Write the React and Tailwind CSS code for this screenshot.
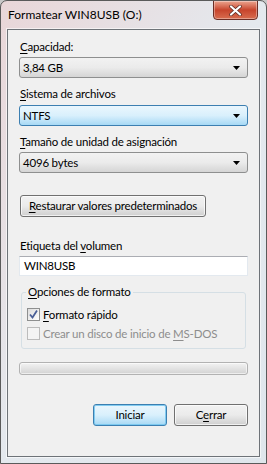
import React from "react";

const font = { fontFamily: 'Lato, "Noto Sans", sans-serif' };

function U({ children }) {
  return <span className="underline underline-offset-[2px] decoration-1">{children}</span>;
}

function Arrow() {
  return (
    <svg width="7" height="4" viewBox="0 0 7 4" className="shrink-0">
      <path d="M0 0h7L3.5 4z" fill="#000" />
    </svg>
  );
}

function Combo({ value, focused }) {
  return (
    <div
      className={
        "h-[21px] mx-[11px] rounded-[3px] border flex items-center justify-between pl-[3px] pr-[7px] " +
        (focused
          ? "border-[#3c7fb1] bg-gradient-to-b from-[#eaf6fd] via-[#d9f0fc] to-[#a7d9f5]"
          : "border-[#8e8f8f] bg-gradient-to-b from-[#f2f2f2] via-[#ebebeb] to-[#d5d5d5]")
      }
    >
      <span className="leading-none text-black">{value}</span>
      <Arrow />
    </div>
  );
}

function Label({ children, className = "" }) {
  return <div className={"mx-[12px] leading-[15px] text-black whitespace-nowrap " + className}>{children}</div>;
}

export default function App() {
  return (
    <div style={font} className="w-[267px] h-[464px] bg-[#c8c8c8] text-[11.5px] tracking-[-0.2px]">
      <div className="w-[267px] h-[464px] rounded-t-[7px] border border-[#5a5a5a] bg-gradient-to-br from-[#e9d6d8] via-[#e4e9ee] to-[#dfe6ec] flex flex-col overflow-hidden">
        <div className="h-[28px] flex items-start justify-between shrink-0">
          <div className="pl-[7px] pt-[6px] text-[12px] tracking-normal leading-[16px] text-black whitespace-nowrap">Formatear WIN8USB (O:)</div>
          <div className="mr-[8px] mt-[-1px] w-[45px] h-[20px] rounded-b-[4px] border border-[#6b2e26] bg-gradient-to-b from-[#eba48f] via-[#c7442c] to-[#d86c4f] flex items-center justify-center shadow-[inset_0_0_0_1px_rgba(255,255,255,0.35)]">
            <svg width="13" height="11" viewBox="0 0 13 11">
              <path d="M2 1.5l9 8M11 1.5l-9 8" stroke="#5a2a22" strokeWidth="3.6" strokeLinecap="round" />
              <path d="M2 1.5l9 8M11 1.5l-9 8" stroke="#ffffff" strokeWidth="2.2" strokeLinecap="round" />
            </svg>
          </div>
        </div>
        <div className="mx-[6px] mb-[6px] flex-1 border border-[#6e7378] bg-[#f0f0f0] flex flex-col shadow-[0_0_0_1px_rgba(255,255,255,0.6)]">
          <Label className="mt-[9px]"><U>C</U>apacidad:</Label>
          <div className="mt-[3px]"><Combo value="3,84 GB" /></div>
          <Label className="mt-[8px]"><U>S</U>istema de archivos</Label>
          <div className="mt-[4px]"><Combo value="NTFS" focused /></div>
          <Label className="mt-[8px]"><U>T</U>amaño de unidad de asignación</Label>
          <div className="mt-[3px]"><Combo value="4096 bytes" /></div>
          <div className="mt-[22px] mx-[12px]">
            <div className="w-[186px] h-[22px] rounded-[3px] border border-[#707070] bg-gradient-to-b from-[#f2f2f2] via-[#ebebeb] to-[#cfcfcf] flex items-center justify-center leading-none text-black whitespace-nowrap shadow-[inset_0_0_0_1px_rgba(255,255,255,0.7)]">
              <span><U>R</U>estaurar valores predeterminados</span>
            </div>
          </div>
          <Label className="mt-[21px]">Etiqueta del <U>v</U>olumen</Label>
          <div className="mt-[3px] mx-[11px] h-[20px] bg-white border border-[#e3e9ef] border-t-[#abadb3] flex items-center pl-[4px] leading-none text-black">
            WIN8USB
          </div>
          <div className="mt-[8px] mx-[13px] relative">
            <div className="h-[57px] mt-[8px] border border-[#d5dfe5] rounded-[3px] flex flex-col pt-[13px] pl-[5px]">
              <div className="flex items-center gap-[3px] h-[17px]">
                <div className="w-[13px] h-[13px] border border-[#8e8f8f] bg-gradient-to-br from-[#dcdcdc] to-[#ffffff] flex items-center justify-center">
                  <svg width="11" height="11" viewBox="0 0 11 11">
                    <path d="M2 5.5l2.5 3L9 1.5" stroke="#4a5f97" strokeWidth="1.8" fill="none" />
                  </svg>
                </div>
                <span className="leading-none text-black whitespace-nowrap"><U>F</U>ormato rápido</span>
              </div>
              <div className="flex items-center gap-[3px] h-[17px] mt-[2px]">
                <div className="w-[13px] h-[13px] border border-[#bcbcbc] bg-[#f4f4f4]" />
                <span className="leading-none text-[#8d8d8d] whitespace-nowrap">Crear un disco de inicio de <U>M</U>S-DOS</span>
              </div>
            </div>
            <div className="absolute left-[5px] top-0 px-[2px] bg-[#f0f0f0] leading-[16px] text-black whitespace-nowrap">
              <U>O</U>pciones de formato
            </div>
          </div>
          <div className="mt-[13px] mx-[11px] h-[13px] rounded-[3px] border border-[#b2b2b2] bg-gradient-to-b from-[#f3f3f3] via-[#e3e3e3] to-[#d2d2d2] shadow-[inset_0_0_0_1px_rgba(255,255,255,0.6)]" />
          <div className="mt-[29px] mr-[11px] flex justify-end gap-[7px]">
            <div className="w-[74px] h-[22px] rounded-[3px] border border-[#3c7fb1] bg-gradient-to-b from-[#eaf6fd] via-[#d9f0fc] to-[#a7d9f5] flex items-center justify-center leading-none text-black shadow-[inset_0_0_0_1px_rgba(120,200,240,0.9)]">
              Iniciar
            </div>
            <div className="w-[74px] h-[22px] rounded-[3px] border border-[#707070] bg-gradient-to-b from-[#f2f2f2] via-[#ebebeb] to-[#cfcfcf] flex items-center justify-center leading-none text-black shadow-[inset_0_0_0_1px_rgba(255,255,255,0.7)]">
              <span>C<U>e</U>rrar</span>
            </div>
          </div>
        </div>
      </div>
    </div>
  );
}
